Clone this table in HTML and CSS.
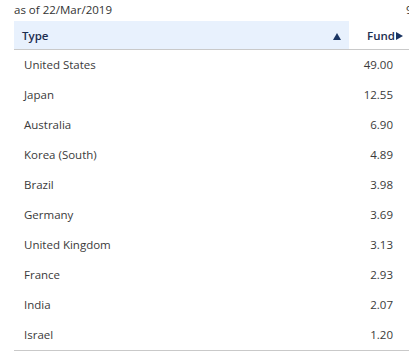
FILE: index.html
```html
<!DOCTYPE html>
<html>
<head>
<meta charset="utf-8">
<link rel="stylesheet" href="styles.css">
</head>
<body>
<div class="wrap">
  <div class="topbar">
    <span class="asof">as of 22/Mar/2019</span>
    <span class="more">9</span>
  </div>
  <div class="table">
    <div class="head">
      <div class="th type">Type <span class="up"></span></div>
      <div class="th fund">Fund<span class="right"></span></div>
    </div>
    <div class="row"><span class="name">United States</span><span class="val">49.00</span></div>
    <div class="row"><span class="name">Japan</span><span class="val">12.55</span></div>
    <div class="row"><span class="name">Australia</span><span class="val">6.90</span></div>
    <div class="row"><span class="name">Korea (South)</span><span class="val">4.89</span></div>
    <div class="row"><span class="name">Brazil</span><span class="val">3.98</span></div>
    <div class="row"><span class="name">Germany</span><span class="val">3.69</span></div>
    <div class="row"><span class="name">United Kingdom</span><span class="val">3.13</span></div>
    <div class="row"><span class="name">France</span><span class="val">2.93</span></div>
    <div class="row"><span class="name">India</span><span class="val">2.07</span></div>
    <div class="row last"><span class="name">Israel</span><span class="val">1.20</span></div>
  </div>
</div>
</body>
</html>
```
FILE: styles.css
```css
html, body {
  margin: 0;
  padding: 0;
  background: #fff;
  overflow: hidden;
}
body {
  font-family: "Open Sans", "Noto Sans", sans-serif;
  font-size: 11.5px;
  color: #333;
  width: 409px;
  height: 352px;
}
.wrap {
  padding-left: 14px;
  width: 460px;
}
.topbar {
  display: flex;
  height: 21px;
  align-items: center;
  color: #333;
}
.asof {
  width: 392px;
  margin-top: -3px;
}
.more {
  margin-top: -3px;
}
.table {
  width: 395px;
}
.head {
  display: flex;
  height: 28px;
  border-bottom: 1px solid #c9c9c9;
}
.th {
  display: flex;
  align-items: center;
  font-weight: 600;
  color: #1c2e50;
}
.type {
  width: 319px;
  background: #e8f1fd;
  padding-left: 8px;
  justify-content: space-between;
  padding-right: 8px;
}
.fund {
  flex: 1;
  justify-content: flex-end;
  padding-right: 6px;
}
.up {
  width: 0;
  height: 0;
  border-left: 4px solid transparent;
  border-right: 4px solid transparent;
  border-bottom: 7px solid #1a3563;
  margin-top: 2px;
}
.right {
  width: 0;
  height: 0;
  border-top: 4px solid transparent;
  border-bottom: 4px solid transparent;
  border-left: 7px solid #1a3563;
  margin-left: 1px;
  margin-top: 1px;
}
.row {
  display: flex;
  box-sizing: border-box;
  height: 30px;
  align-items: center;
  justify-content: space-between;
  padding-left: 10px;
  padding-right: 16px;
  padding-bottom: 2px;
}
.row.last {
  height: 31px;
  border-bottom: 1px solid #c9c9c9;
}
.name, .val {
  color: #3a3a3a;
}
```
